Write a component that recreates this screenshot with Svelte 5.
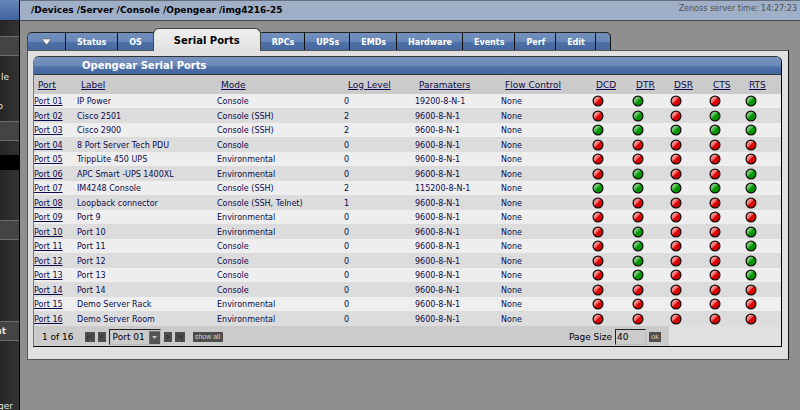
<script>
  const tabs = ['Status', 'OS', 'Serial Ports', 'RPCs', 'UPSs', 'EMDs', 'Hardware', 'Events', 'Perf', 'Edit'];
  const columns = ['Port', 'Label', 'Mode', 'Log Level', 'Paramaters', 'Flow Control', 'DCD', 'DTR', 'DSR', 'CTS', 'RTS'];
  const signals = columns.slice(6);

  // name, mode, log level, parameters, line states in the order DCD DTR DSR CTS RTS
  const ports = [
    ['IP Power', 'Console', 0, '19200-8-N-1', '01001'],
    ['Cisco 2501', 'Console (SSH)', 2, '9600-8-N-1', '01011'],
    ['Cisco 2900', 'Console (SSH)', 2, '9600-8-N-1', '11111'],
    ['8 Port Server Tech PDU', 'Console', 0, '9600-8-N-1', '00000'],
    ['TrippLite 450 UPS', 'Environmental', 0, '9600-8-N-1', '00000'],
    ['APC Smart -UPS 1400XL', 'Environmental', 0, '9600-8-N-1', '01001'],
    ['IM4248 Console', 'Console (SSH)', 2, '115200-8-N-1', '11111'],
    ['Loopback connector', 'Console (SSH, Telnet)', 1, '9600-8-N-1', '00000'],
    ['Port 9', 'Environmental', 0, '9600-8-N-1', '00000'],
    ['Port 10', 'Environmental', 0, '9600-8-N-1', '01001'],
    ['Port 11', 'Console', 0, '9600-8-N-1', '01001'],
    ['Port 12', 'Console', 0, '9600-8-N-1', '01001'],
    ['Port 13', 'Console', 0, '9600-8-N-1', '01001'],
    ['Port 14', 'Console', 0, '9600-8-N-1', '00000'],
    ['Demo Server Rack', 'Environmental', 0, '9600-8-N-1', '00000'],
    ['Demo Server Room', 'Environmental', 0, '9600-8-N-1', '00000']
  ].map(([label, mode, log, params, lines], i) => ({
    id: 'Port ' + String(i + 1).padStart(2, '0'),
    label, mode, log, params,
    lines: [...lines].map((c) => c === '1')
  }));

  let current = $state('Port 01');
  let pageSize = $state('40');
</script>

<svg class="defs" width="0" height="0" aria-hidden="true">
  <defs>
    <linearGradient id="led-red" x1="0.1" y1="0.1" x2="0.8" y2="0.8">
      <stop offset="0" stop-color="#ffc4c4" />
      <stop offset="0.48" stop-color="#f06060" />
      <stop offset="0.58" stop-color="#e00000" />
      <stop offset="1" stop-color="#d00000" />
    </linearGradient>
    <linearGradient id="led-green" x1="0.1" y1="0.1" x2="0.8" y2="0.8">
      <stop offset="0" stop-color="#a8e0a8" />
      <stop offset="0.48" stop-color="#45b445" />
      <stop offset="0.58" stop-color="#009a00" />
      <stop offset="1" stop-color="#009000" />
    </linearGradient>
  </defs>
</svg>

<div class="page">
  <nav class="side" aria-label="Navigation">
    <div class="side-top"></div>
    <div class="band first"></div>
    <div class="items upper"><span>le</span><span class="cut">o</span></div>
    <div class="band"></div>
    <div class="current"></div>
    <div class="band low"></div>
    <div class="band titled"><b>nt</b></div>
    <div class="items lower"><span>ger</span></div>
  </nav>

  <div class="main">
    <header>
      <strong>/Devices /Server /Console /Opengear /img4216-25</strong>
      <span>Zenoss server time: 14:27:23</span>
    </header>

    <main>
      <div class="tabs">
        <button class="tab menu" aria-label="Menu">
          <svg width="11" height="8" viewBox="0 0 11 8"><path d="M1 1H10L5.500 7Z" fill="#f8f8f4" stroke="#4a4a4a" stroke-width="0.500" /></svg>
        </button>
        {#each tabs as tab}
          <a href="#{tab}" class="tab" class:active={tab === 'Serial Ports'}>{tab}</a>
        {/each}
        <span class="tab end"></span>
      </div>

      <section class="panel">
        <div class="box">
          <h2>Opengear Serial Ports</h2>
          <table>
            <thead>
              <tr>
                {#each columns as c}
                  <th><a href="#{c}">{c}</a></th>
                {/each}
              </tr>
            </thead>
            <tbody>
              {#each ports as p}
                <tr>
                  <td><a href="#{p.id}">{p.id}</a></td>
                  <td>{p.label}</td>
                  <td>{p.mode}</td>
                  <td>{p.log}</td>
                  <td>{p.params}</td>
                  <td>None</td>
                  {#each p.lines as on, i}
                    <td class="state">
                      <svg class="led" viewBox="0 0 12 12" role="img" aria-label="{signals[i]} {on ? 'on' : 'off'}">
                        <circle cx="6" cy="6" r="4.900" fill="url(#{on ? 'led-green' : 'led-red'})" stroke="#181010" stroke-width="1.300" />
                      </svg>
                    </td>
                  {/each}
                </tr>
              {/each}
            </tbody>
          </table>

          <div class="pager">
            <div class="nav">
              <span class="count">1 of 16</span>
              <button class="small wide" disabled>|&lt;</button>
              <button class="small" disabled>&lt;</button>
              <span class="picker">
                <select bind:value={current} aria-label="Port">
                  {#each ports as p}
                    <option>{p.id}</option>
                  {/each}
                </select>
                <svg width="11" height="13" viewBox="0 0 11 13"><rect width="11" height="13" fill="#555" /><path d="M0 13V0H11" fill="none" stroke="#888" /><path d="M3 5H8L5.500 8Z" fill="#c8c8c8" /></svg>
              </span>
              <button class="small" disabled>&gt;</button>
              <button class="small wide" disabled>&gt;|</button>
              <button class="small all">show all</button>
            </div>
            <div class="size">
              <label for="page-size">Page Size</label>
              <input id="page-size" type="text" bind:value={pageSize} />
              <button class="small ok">ok</button>
            </div>
          </div>
        </div>
      </section>
    </main>
  </div>
</div>

<style>
  :global(body) {
    margin: 0;
    background: #8f8f8f;
  }
  .page {
    display: flex;
    min-height: 100vh;
    font-family: 'DejaVu Sans', Verdana, sans-serif;
    font-size: 8px;
    color: #0b0b4d;
  }
  .defs {
    position: absolute;
  }
  * {
    box-sizing: border-box;
  }

  .side {
    flex: none;
    width: 20px;
    height: 100vh;
    overflow: hidden;
    border-right: 1px solid #000;
    background: linear-gradient(90deg, #252525, #343434);
    color: #e6e6e6;
    font-size: 9px;
    line-height: 12px;
  }
  .side-top {
    height: 21px;
    background: linear-gradient(#6685b5, #40659f);
    border-bottom: 1px solid #222;
  }
  .band {
    height: 20px;
    background: #444;
    border-top: 1px solid #6c6c6c;
    border-bottom: 1px solid #6c6c6c;
  }
  .first {
    margin-top: 15px;
  }
  .items {
    display: flex;
    flex-direction: column;
  }
  .items span {
    display: block;
    padding-left: 1px;
  }
  .upper {
    height: 65px;
    padding-top: 15px;
    gap: 17px;
  }
  .items .cut {
    display: flex;
    justify-content: flex-end;
    width: 3px;
    padding: 0;
  }
  .current {
    height: 15px;
    margin-top: 14px;
    background: #000;
  }
  .low {
    margin-top: 50px;
  }
  .titled {
    display: flex;
    justify-content: flex-end;
    align-items: center;
    margin-top: 81px;
    padding-right: 13px;
  }
  .lower {
    padding-top: 59px;
  }
  .lower span {
    display: flex;
    justify-content: flex-end;
    width: 13px;
    padding: 0;
  }

  .main {
    flex: 1;
    min-width: 0;
  }
  header {
    display: flex;
    justify-content: space-between;
    height: 21px;
    padding: 0 3px 0 11px;
    line-height: 18px;
    background: #9fafc8;
    border-top: 1px solid #666e7c;
    border-bottom: 1px solid #454a52;
  }
  header strong {
    font-size: 9px;
    color: #000;
  }
  header span {
    color: #505050;
    line-height: 16px;
  }

  main {
    padding: 7px 11px 0 7px;
  }
  .tabs {
    display: flex;
    align-items: flex-end;
    height: 22px;
  }
  .tab {
    display: flex;
    flex: none;
    align-items: center;
    justify-content: center;
    height: 18px;
    padding: 2px 11px 0;
    border: 0;
    border-top: 1px solid #222;
    border-right: 1px solid #111;
    background: linear-gradient(#7390bd, #6888b9 50%, #4c6fa6 55%, #47699f);
    color: #fff;
    font-weight: bold;
    text-decoration: none;
  }
  .active ~ .tab {
    padding-right: 10px;
  }
  .menu {
    width: 39px;
    padding-top: 0;
    border-left: 1px solid #444;
    border-radius: 5px 0 0 0;
  }
  .active {
    position: relative;
    height: 23px;
    margin: 0 0 -1px -1px;
    padding: 0 20px;
    border: 1px solid #444;
    border-bottom: 0;
    border-radius: 6px 6px 0 0;
    background: linear-gradient(#eee, #e8e8e8 60%, #dfdfdf);
    color: #000;
    font-size: 10px;
  }
  .active ~ .end {
    width: 15px;
    padding: 0;
    border-radius: 0 5px 0 0;
  }

  .panel {
    padding: 5px 6px 12px 5px;
    background: #e0e0e0;
    border: 1px solid #555;
    border-right-color: #111;
  }
  .box {
    overflow: hidden;
    border: 1px solid #333;
    border-left-color: #777;
    border-right-color: #000;
    border-bottom-color: #000;
    border-radius: 6px 6px 0 0;
  }
  h2 {
    margin: 0;
    padding-left: 48px;
    font-size: 10px;
    line-height: 17px;
    color: #fff;
    background: linear-gradient(#7993bf, #6b89b9 50%, #4d70a7 60%, #43679f);
    border-bottom: 1px solid #333;
  }
  table {
    width: 100%;
    table-layout: fixed;
    border-collapse: collapse;
  }
  th,
  td {
    padding: 0;
    text-align: left;
    white-space: nowrap;
  }
  th {
    height: 19px;
    padding-left: 4px;
    font-size: 9px;
    line-height: 14px;
    font-weight: normal;
    background: #cbcbcb;
  }
  th:nth-child(1) { width: 43px; }
  th:nth-child(3) { width: 127px; }
  th:nth-child(4) { width: 71px; }
  th:nth-child(5) { width: 86px; }
  th:nth-child(6) { width: 91px; }
  th:nth-child(7) { width: 40px; }
  th:nth-child(8) { width: 38px; }
  th:nth-child(9) { width: 39px; }
  th:nth-child(10) { width: 36px; }
  th:nth-child(11) { width: 36px; }
  th a,
  td a {
    color: inherit;
  }
  td {
    height: 14px;
    padding-top: 2px;
    line-height: 12px;
    background: #eee;
  }
  tr:nth-child(even) td {
    height: 15px;
    background: #dcdcdc;
  }
  .state {
    padding: 0;
  }
  .led {
    display: block;
    width: 12px;
    height: 12px;
  }

  .pager {
    display: flex;
    font-size: 9px;
    color: #000;
    background: #e0e0e0;
  }
  .nav,
  .size {
    display: flex;
    align-items: center;
    gap: 3px;
    height: 20px;
    padding-top: 2px;
    background: #cbcbcb;
  }
  .nav {
    flex: 1;
    padding-left: 8px;
  }
  .size {
    padding-right: 8px;
    margin-right: 112px;
  }
  .count {
    margin-right: 8px;
  }
  .small {
    width: 8px;
    height: 10px;
    padding: 0;
    border: 0;
    background: #4d4d4d;
    color: #d0d0d0;
    font: 7px/10px 'Liberation Sans', Arial, sans-serif;
    text-align: center;
  }
  .small:disabled {
    color: #1c1c1c;
  }
  .wide {
    width: 10px;
  }
  .ok {
    width: 12px;
  }
  .all {
    width: 30px;
    margin-left: 5px;
  }
  .picker {
    position: relative;
    display: flex;
  }
  .picker svg {
    position: absolute;
    right: 1px;
    top: 2px;
    pointer-events: none;
  }
  select,
  input {
    height: 16px;
    margin: 0;
    border: 1px solid #bbb;
    border-top-color: #222;
    border-left-color: #222;
    border-radius: 0;
    background: #cbcbcb;
    color: #000;
    font: 9px 'DejaVu Sans', sans-serif;
    appearance: none;
  }
  select {
    width: 52px;
    padding: 0 0 0 3px;
  }
  input {
    width: 31px;
    padding: 0 1px;
  }
</style>
